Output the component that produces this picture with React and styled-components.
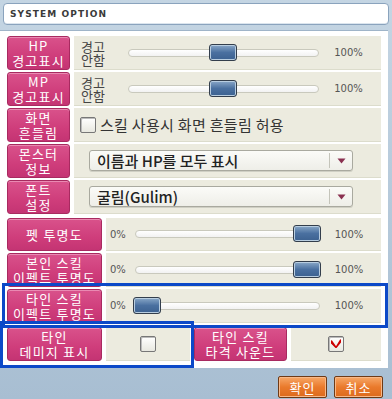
import React from 'react';
import styled, { createGlobalStyle } from 'styled-components';

const GlobalStyle = createGlobalStyle`
  html, body {
    margin: 0;
    padding: 0;
    background: #b9cddd;
  }
  body {
    font-family: "Noto Sans CJK KR", "Noto Sans", sans-serif;
  }
`;

const Window = styled.div`
  position: relative;
  width: 392px;
  height: 399px;
  background: linear-gradient(#c4d5e3, #a8bed2);
  display: flex;
  flex-direction: column;
  overflow: hidden;
`;

const TitleBox = styled.div`
  margin: 3px 3px 0 3px;
  height: 20px;
  background: #fff;
  border: 1px solid #8aa3bd;
  border-radius: 4px;
  box-shadow: inset 0 -1px 0 #dbe5ee;
  display: flex;
  align-items: center;
  padding-left: 6px;
  font-family: "DejaVu Sans", sans-serif;
  font-size: 9px;
  font-weight: 600;
  letter-spacing: 1.1px;
  color: #3a3a3a;
`;

const Panel = styled.div`
  margin: 5px 4px 0 0;
  border-top: 1px solid #9fb4c8;
  background: #fff;
  padding: 5px 7px 7px 7px;
  display: flex;
  flex-direction: column;
  gap: 2px;
`;

const Row = styled.div`
  display: grid;
  grid-template-columns: ${p => p.$wide ? '95px 1fr' : '63px 1fr'};
  column-gap: 4px;
  height: ${p => p.$h || 34}px;
  margin-top: ${p => p.$mt || 0}px;
`;

const SplitRow = styled.div`
  display: grid;
  grid-template-columns: 95px 84px 93px 1fr;
  column-gap: 4px;
  height: 34px;
  margin-top: 2px;
`;

const Label = styled.div`
  background: linear-gradient(#d9528b, #cf3d7b 60%, #c43473);
  border: 1px solid #a82a60;
  border-radius: 3px;
  box-shadow: inset 0 1px 0 #e98ab2;
  color: #fff;
  font-size: 13px;
  line-height: 15px;
  letter-spacing: 1.2px;
  text-align: center;
  display: flex;
  flex-direction: column;
  justify-content: center;
  white-space: nowrap;
  overflow: hidden;
`;

const Content = styled.div`
  background: #ecebdf;
  border-bottom: 1px solid #dcdccc;
  display: flex;
  align-items: center;
  padding: 0 ${p => p.$pr || 0}px 0 ${p => p.$pl || 0}px;
  justify-content: ${p => p.$center ? 'center' : 'flex-start'};
`;

const SmallLabel = styled.div`
  width: 38px;
  font-size: 13px;
  line-height: 13px;
  color: #444;
  text-align: center;
`;

const Track = styled.div`
  position: relative;
  flex: 1;
  height: 6px;
  background: linear-gradient(#fff, #f2f2f2);
  border: 1px solid #c9c9bd;
  border-radius: 4px;
`;

const Handle = styled.div`
  position: absolute;
  top: -6px;
  width: 26px;
  height: 15px;
  border: 1px solid #333e4c;
  border-radius: 3px;
  background: linear-gradient(#8aa8c8, #4a70a0 50%, #3c6190);
  box-shadow: inset 0 0 0 1px #b8cde0;
`;

const Pct = styled.div`
  font-family: "DejaVu Sans", sans-serif;
  font-size: 10px;
  color: #555;
  width: ${p => p.$w || 'auto'};
  text-align: ${p => p.$align || 'left'};
`;

const CheckBox = styled.div`
  width: 14px;
  height: 14px;
  border: 1px solid #777;
  border-radius: 2px;
  background: linear-gradient(#fff, #e8e8e0);
  box-shadow: inset 1px 1px 0 #bbb;
  display: flex;
  align-items: center;
  justify-content: center;
  flex-shrink: 0;
`;

const CheckText = styled.span`
  margin-left: 4px;
  font-size: 15px;
  color: #333;
  letter-spacing: 0.3px;
`;

const Select = styled.div`
  margin-left: 15px;
  width: 262px;
  height: 19px;
  background: linear-gradient(#fbfbf8, #eeeee8);
  border: 1px solid #a9a99f;
  border-radius: 3px;
  box-shadow: 0 1px 0 #cfcfc4;
  display: flex;
  align-items: center;
  font-size: 15px;
  color: #222;
`;

const SelectText = styled.div`
  flex: 1;
  padding-left: 7px;
  font-weight: 500;
`;

const SelectArrow = styled.div`
  width: 22px;
  height: 15px;
  border-left: 1px solid #c4c4ba;
  display: flex;
  align-items: center;
  justify-content: center;
`;

const Bottom = styled.div`
  flex: 1;
  display: flex;
  justify-content: flex-end;
  align-items: flex-end;
  gap: 7px;
  padding: 0 9px 1px 0;
`;

const Button = styled.div`
  width: 47px;
  height: 20px;
  border: 1px solid #6e3a16;
  border-radius: 2px;
  background: linear-gradient(#f7a868, #ea7a2c 50%, #dc6a1c);
  box-shadow: inset 0 0 0 1px #f8b888;
  color: #fff;
  font-size: 13px;
  letter-spacing: 1px;
  display: flex;
  align-items: center;
  justify-content: center;
`;

const Highlight = styled.div`
  position: absolute;
  border: 3px solid #0c49c8;
  pointer-events: none;
`;

function Slider({ at, left, labels }) {
  // at: 'mid' | 'end' | 'start'
  const handleStyle =
    at === 'mid' ? { left: 80 } : at === 'end' ? { right: -2 } : { left: -3 };
  return (
    <Content $pl={left ? 4 : 0} $pr={3}>
      {labels ? <SmallLabel>{labels[0]}<br />{labels[1]}</SmallLabel> : <Pct $w="25px">0%</Pct>}
      <Track style={{ marginLeft: labels ? 16 : 0 }}>
        <Handle style={handleStyle} />
      </Track>
      <Pct $w={labels ? '59px' : '58px'} $align="center">100%</Pct>
    </Content>
  );
}

function Arrow() {
  return (
    <svg width="9" height="6" viewBox="0 0 9 6">
      <path d="M0.5 0.5 L8.5 0.5 L4.5 5.5 Z" fill="#8a3050" />
    </svg>
  );
}

function Check({ checked }) {
  return (
    <CheckBox>
      {checked && (
        <svg width="10" height="9" viewBox="0 0 10 9">
          <path d="M0.5 2 L5 8.5 L9.5 1 L9.5 3 L5 8.5 L0.5 4 Z" fill="#d01020" stroke="#c00" strokeWidth="1.4" strokeLinejoin="round" />
        </svg>
      )}
    </CheckBox>
  );
}

export default function App() {
  return (
    <Window>
      <GlobalStyle />
      <TitleBox>SYSTEM OPTION</TitleBox>
      <Panel>
        <Row>
          <Label><span>HP</span><span>경고표시</span></Label>
          <Slider at="mid" labels={['경고', '안함']} />
        </Row>
        <Row>
          <Label><span>MP</span><span>경고표시</span></Label>
          <Slider at="mid" labels={['경고', '안함']} />
        </Row>
        <Row>
          <Label><span>화면</span><span>흔들림</span></Label>
          <Content $pl={6}>
            <Check />
            <CheckText>스킬 사용시 화면 흔들림 허용</CheckText>
          </Content>
        </Row>
        <Row>
          <Label><span>몬스터</span><span>정보</span></Label>
          <Content>
            <Select>
              <SelectText>이름과 HP를 모두 표시</SelectText>
              <SelectArrow><Arrow /></SelectArrow>
            </Select>
          </Content>
        </Row>
        <Row>
          <Label><span>폰트</span><span>설정</span></Label>
          <Content>
            <Select>
              <SelectText>굴림(Gulim)</SelectText>
              <SelectArrow><Arrow /></SelectArrow>
            </Select>
          </Content>
        </Row>
        <Row $wide $h={33} $mt={2}>
          <Label>펫 투명도</Label>
          <Slider at="end" left />
        </Row>
        <Row $wide>
          <Label><span>본인 스킬</span><span>이펙트 투명도</span></Label>
          <Slider at="end" left />
        </Row>
        <Row $wide>
          <Label><span>타인 스킬</span><span>이펙트 투명도</span></Label>
          <Slider at="start" left />
        </Row>
        <SplitRow>
          <Label><span>타인</span><span>데미지 표시</span></Label>
          <Content $center><Check /></Content>
          <Label><span>타인 스킬</span><span>타격 사운드</span></Label>
          <Content $center><Check checked /></Content>
        </SplitRow>
      </Panel>
      <Bottom>
        <Button>확인</Button>
        <Button>취소</Button>
      </Bottom>
      <Highlight style={{ left: 2, top: 283, width: 380, height: 39 }} />
      <Highlight style={{ left: 0, top: 321, width: 188, height: 41 }} />
    </Window>
  );
}
